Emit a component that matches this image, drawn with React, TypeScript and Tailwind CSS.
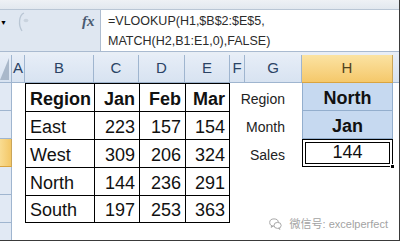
import React from "react";

// Sheet geometry: row header, A..H, remainder
const COLS = ["A", "B", "C", "D", "E", "F", "G", "H"];

const TABLE = [
  ["Region", "Jan", "Feb", "Mar"],
  ["East", "223", "157", "154"],
  ["West", "309", "206", "324"],
  ["North", "144", "236", "291"],
  ["South", "197", "253", "363"],
];

const LOOKUP = [
  { label: "Region", value: "North" },
  { label: "Month", value: "Jan" },
  { label: "Sales", value: "144" },
];

function WeChatIcon() {
  return (
    <svg width="13" height="12" viewBox="0 0 13 12" fill="none" stroke="#a8a8a8" strokeWidth="1">
      <ellipse cx="5" cy="4.5" rx="4.3" ry="3.6" />
      <path d="M2.6 7.6 L2.2 9.4 L4.2 8.1" />
      <ellipse cx="8.6" cy="7.4" rx="3.6" ry="3" fill="white" />
      <path d="M10.4 10.1 L11 11.4 L9.3 10.4" />
    </svg>
  );
}

function ColHeader({ letter, active }: { letter: string; active?: boolean }) {
  return (
    <div
      className={`flex items-center justify-center border-r border-b text-[15px] ${
        active
          ? "bg-gradient-to-b from-[#fbe3a2] to-[#f5c86a] border-r-[#c9a55a] border-b-[#d9a440] text-[#4f4320]"
          : "bg-gradient-to-b from-[#e6edf7] to-[#d8e3f1] border-[#9fb5cf] text-[#2a4365]"
      }`}
    >
      {letter}
    </div>
  );
}

function RowHeader({ active }: { active?: boolean }) {
  return (
    <div
      className={`border-r border-b ${
        active
          ? "bg-gradient-to-r from-[#f9dc91] to-[#f3c766] border-r-[#c9a55a] border-b-[#d9a440]"
          : "bg-[#e1e9f4] border-[#9fb5cf]"
      }`}
    />
  );
}

export default function App() {
  return (
    <div className="relative w-[400px] h-[241px] overflow-hidden bg-white border-r border-b border-[#3a3a3a] font-['Liberation_Sans',Arial,sans-serif]">
      {/* ribbon bottom edge */}
      <div className="h-[10px] bg-gradient-to-b from-[#eef1f5] to-[#e2e8ef] border-b border-[#b9c6d5]" />

      {/* formula bar */}
      <div className="flex h-[42px] border-b border-[#a9bad0]">
        <div className="relative flex w-[100px] items-start bg-[#dfe7f1]">
          <span className="mt-[9px] ml-[0px] text-[7px] leading-none text-black">▼</span>
          <svg className="mt-[2px] ml-[9px]" width="18" height="20" viewBox="0 0 18 20" fill="none">
            <path d="M8 1 C3 3 2 13 6 19" stroke="#b9c6d4" strokeWidth="1.3" />
            <ellipse cx="10" cy="8.5" rx="2.4" ry="1.8" fill="#c9d3de" />
          </svg>
          <span className="mt-[4px] ml-[48px] font-['Liberation_Serif',serif] italic font-bold text-[15px] leading-none text-[#4a5b72]">
            fx
          </span>
        </div>
        <div className="flex-1 border-l border-[#aebdd0] bg-white pl-[7px] pt-[2px] text-[12.5px] leading-[19.5px] text-[#2b2b2b]">
          <div>=VLOOKUP(H1,$B$2:$E$5,</div>
          <div>MATCH(H2,B1:E1,0),FALSE)</div>
        </div>
      </div>
      <div className="h-[3px] bg-[#e8eef6]" />

      {/* sheet */}
      <div className="grid grid-cols-[12px_13px_69px_45px_46px_45px_15px_57px_91px_1fr] grid-rows-[28px_28px_28px_28px_28px_28px_18px]">
        {/* header row */}
        <div className="relative border-r border-b border-[#9fb5cf] bg-gradient-to-b from-[#e6edf7] to-[#d8e3f1]">
          <svg className="absolute left-0 top-[3px]" width="10" height="22" viewBox="0 0 10 22">
            <polygon points="0,22 9,0 9,22" fill="#a9b8ca" />
          </svg>
        </div>
        {COLS.map((c) => (
          <ColHeader key={c} letter={c} active={c === "H"} />
        ))}
        <div className="border-b border-[#9fb5cf] bg-gradient-to-b from-[#e6edf7] to-[#d8e3f1]" />

        {/* data rows */}
        {[0, 1, 2, 3, 4].map((r) => (
          <React.Fragment key={r}>
            <RowHeader active={r === 2} />
            <div />
            {TABLE[r].map((v, ci) => (
              <div
                key={ci}
                className={`flex items-end border-l border-t border-black pb-[2px] text-[18px] leading-[20px] text-[#111] ${
                  ci === 0 ? "justify-start pl-[4px]" : "justify-end pr-[4px]"
                } ${ci === 3 ? "border-r" : ""} ${r === 4 ? "border-b" : ""} ${r === 0 ? "font-bold" : ""}`}
              >
                {v}
              </div>
            ))}
            <div />
            <div className="flex items-end justify-end pr-[17px] pb-[4px] text-[14px] leading-[16px] text-[#222]">
              {LOOKUP[r]?.label}
            </div>
            {r < 2 ? (
              <div className="flex items-end justify-center border-x border-b border-[#93aecd] bg-[#c6d9f0] pb-[2px] text-[18px] leading-[20px] font-bold text-[#111]">
                {LOOKUP[r].value}
              </div>
            ) : r === 2 ? (
              <div className="relative border border-black p-[2px]">
                <div className="flex h-full items-end justify-center border border-black pb-[1px] text-[18px] leading-[20px] text-[#111]">
                  {LOOKUP[r].value}
                </div>
                <div className="absolute -right-[3px] -bottom-[3px] h-[5px] w-[5px] border border-white bg-black" />
              </div>
            ) : (
              <div />
            )}
            <div />
          </React.Fragment>
        ))}

        {/* row 6 */}
        <RowHeader />
        {Array.from({ length: 9 }).map((_, i) => (
          <div key={i} />
        ))}
      </div>

      {/* watermark */}
      <div className="absolute right-[11px] bottom-[10px] flex items-center gap-[8px] text-[11px] leading-none text-[#a3a3a3] font-['Liberation_Sans','Noto_Sans_CJK_SC',sans-serif]">
        <WeChatIcon />
        <span>微信号: excelperfect</span>
      </div>
    </div>
  );
}
